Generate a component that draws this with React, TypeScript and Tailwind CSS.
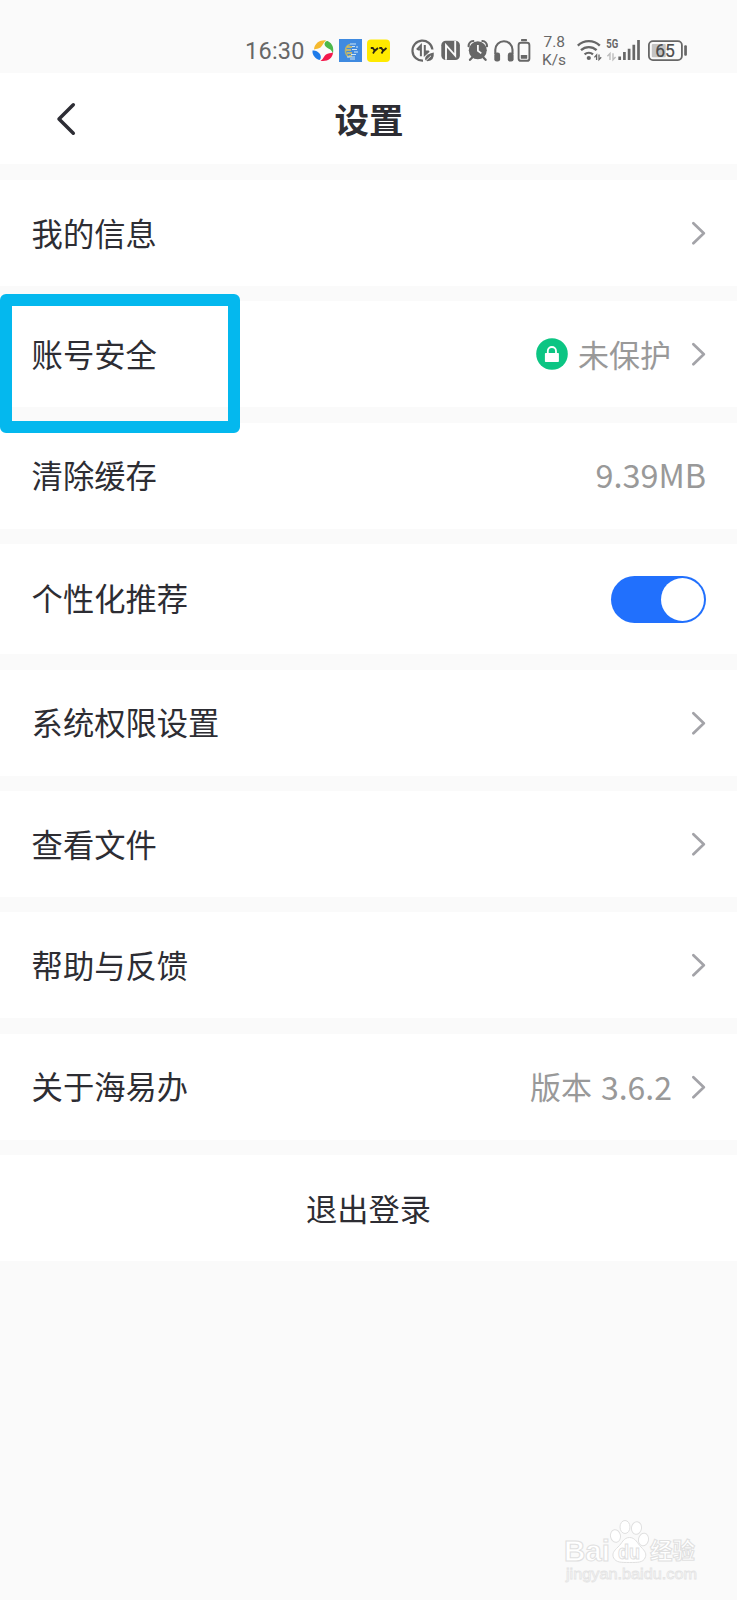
import type { ReactNode } from "react";

const INK = "#676767";
const CJK = "font-['Noto_Sans_CJK_SC',sans-serif]";

function Glyph({ x, w, children, className = "" }: { x: number; w: number; children: ReactNode; className?: string }) {
  return (
    <svg width={w} height={36} viewBox={`${x} 32 ${w} 36`} className={`shrink-0 ${className}`} fill="none">
      {children}
    </svg>
  );
}

function StatusBar() {
  return (
    <div className="flex h-[73px] items-start bg-[#fafafa] pt-[32px] pl-[244px]">
      <Glyph x={244} w={66}>
        <text x="245" y="58.6" fontFamily="Roboto, sans-serif" fontSize="23.5" textLength="59.5" fill={INK}>16:30</text>
      </Glyph>
      <Glyph x={310} w={26}>
        <path d="M314 49.5C314.5 43 320 39.8 326 40.3C323 43 323 45.5 320.5 47.5C318.5 49 316.5 48.5 314 49.5Z" fill="#f5b92e" />
        <path d="M324.5 43.8C325.5 40.8 327 40.8 328 41.3C332.5 43.5 334 48 333 53.5C331.5 49.5 330 49.5 327.5 48C325.5 46.8 324.5 45.5 324.5 43.8Z" fill="#4cb84a" />
        <path d="M333 52.5C332.5 58.5 327.5 61.8 320.5 60.8C324 58.5 323.5 56.5 326 54.5C328 53 330.5 53.5 333 52.5Z" fill="#f3184c" />
        <path d="M312.5 50.5C315 50 317.5 51 319.5 53.5C321.5 56 321 59 319.5 60C315.5 59 312 55 312.5 50.5Z" fill="#1e7bea" />
      </Glyph>
      <Glyph x={336} w={29}>
        <rect x="339" y="39" width="23" height="23" fill="#3f8ae0" />
        <path d="M350 44.5 Q345.5 46 345.5 50.5 Q345.5 55 349 57" stroke="#b9b26a" strokeWidth="1.6" />
        <path d="M347 47h5M346 50h5M347 53h5M349 56h3" stroke="#e2c256" strokeWidth="1.3" />
        <path d="M350 44h6M352 46.5h3M356 47h2M352 49.5h5M354 52h4M351 54.5h5M347 57h8M350 59h5" stroke="#cfe6f4" strokeWidth="1" />
      </Glyph>
      <Glyph x={365} w={45}>
        <rect x="367" y="39.5" width="23" height="22.5" rx="4" fill="#ffea00" />
        <path d="M370.8 48h2l2 2.8l3.2-2.8M374.8 50.6l-1.8 2.8M379.3 48h2l2 2.8l3.2-2.8M383.3 50.6l-1.8 2.8" stroke="#2b2613" strokeWidth="1.8" />
      </Glyph>
      <Glyph x={410} w={28}>
        <path d="M432.4 49.5 A10 10 0 1 0 423 60.6" stroke={INK} strokeWidth="2.2" />
        <path d="M420.9 56.3V45.5L416.8 49.6M420.9 49.5h-3M424.8 45v9.8L429 51M425 51.5h3.5" stroke={INK} strokeWidth="2" />
        <path d="M433.8 52.5 Q434.5 61 427.5 61.2 Q424 61 425.5 57 Q427.5 53.8 433.8 52.5Z" fill={INK} />
        <path d="M424.5 62 L431 55.8" stroke="#fafafa" strokeWidth="0.9" />
      </Glyph>
      <Glyph x={438} w={26}>
        <rect x="441.3" y="40.8" width="18.6" height="19.2" rx="4.5" fill={INK} />
        <path d="M446 59.8V45.2L455.2 55.6V41" stroke="#fafafa" strokeWidth="1.9" />
      </Glyph>
      <Glyph x={464} w={27}>
        <circle cx="477.8" cy="50.3" r="9" fill={INK} />
        <path d="M468.6 46.2 A5 5 0 0 1 473.3 41M482.4 41 A5 5 0 0 1 487 46.2" stroke={INK} strokeWidth="2.2" strokeLinecap="round" />
        <path d="M472.2 57.5l-2.2 2.3M483.4 57.5l2.2 2.3" stroke={INK} strokeWidth="2.3" strokeLinecap="round" />
        <path d="M477.9 45v5.8l3.4 2.6" stroke="#fafafa" strokeWidth="1.8" />
      </Glyph>
      <Glyph x={491} w={25}>
        <path d="M495.3 54V49.8a8.6 8.6 0 0 1 17.2 0V54" stroke={INK} strokeWidth="2.1" />
        <rect x="494.3" y="52.6" width="5.8" height="9" rx="2.4" fill={INK} />
        <rect x="507.8" y="52.6" width="5.8" height="9" rx="2.4" fill={INK} />
      </Glyph>
      <Glyph x={516} w={20}>
        <rect x="518.6" y="42.8" width="10.8" height="18" rx="2.4" stroke={INK} strokeWidth="1.9" />
        <rect x="521" y="39" width="6" height="2.2" rx="0.8" fill={INK} />
        <rect x="520.8" y="55" width="6.4" height="3.8" rx="0.6" fill={INK} />
      </Glyph>
      <Glyph x={536} w={38}>
        <text x="543.5" y="47.3" fontFamily="Roboto, sans-serif" fontSize="15.5" textLength="21.5" fill={INK}>7.8</text>
        <text x="542" y="65" fontFamily="Roboto, sans-serif" fontSize="15.5" textLength="24" fill={INK}>K/s</text>
      </Glyph>
      <Glyph x={574} w={30}>
        <path d="M577.8 45.6a16 16 0 0 1 22 0M581 50.2a11.5 11.5 0 0 1 15.6 0M584.6 54.4a6.5 6.5 0 0 1 8.4 0" stroke={INK} strokeWidth="2.3" />
        <circle cx="588.8" cy="58" r="2.1" fill={INK} />
        <path d="M596.6 60v-5l-2.2 2.4M599 54.6v5l2.2-2.4" stroke={INK} strokeWidth="1.3" />
      </Glyph>
      <Glyph x={604} w={40}>
        <text x="606.3" y="48" fontFamily="Roboto, sans-serif" fontWeight="700" fontSize="12" textLength="12" lengthAdjust="spacingAndGlyphs" fill={INK}>5G</text>
        <path d="M610 60v-6.5l-2.6 2.8M613 53.2v6.5l2.6-2.8" stroke="#bdbdbd" strokeWidth="1.4" />
        <path d="M619.7 60v-3.5M624.4 60v-8M629.1 60v-11.2M633.8 60v-15.2M638.5 60V40" stroke={INK} strokeWidth="2.7" />
      </Glyph>
      <Glyph x={644} w={46}>
        <rect x="648.9" y="41.1" width="33" height="19" rx="4" stroke={INK} strokeWidth="1.8" />
        <rect x="651.8" y="44" width="14" height="13.2" rx="1" fill="#c4c4c4" />
        <rect x="684.2" y="45.2" width="2.7" height="10.6" rx="1" fill={INK} />
        <text x="655.3" y="56.9" fontFamily="Roboto, sans-serif" fontSize="17.5" textLength="19.5" fill="#4c4c4c" stroke="#4c4c4c" strokeWidth="0.2">65</text>
      </Glyph>
    </div>
  );
}

function Chevron() {
  return (
    <svg width="14" height="26" viewBox="0 0 14 26" fill="none" className="ml-[20px] shrink-0">
      <path d="M1.4 3.2 L11.8 13.2 L1.4 23.2" stroke="#a3a3a8" strokeWidth="2.7" strokeLinecap="round" strokeLinejoin="round" />
    </svg>
  );
}

function LockBadge() {
  return (
    <svg width="32" height="32" viewBox="0 0 32 32" fill="none" className="mr-[10px]">
      <circle cx="16" cy="16" r="15.8" fill="#0cc583" />
      <path d="M11.8 16v-2.9a4.1 4.1 0 0 1 8.2 0V16" stroke="#fff" strokeWidth="1.8" />
      <rect x="8.9" y="15" width="14" height="9" rx="0.8" fill="#fff" />
    </svg>
  );
}

function Toggle() {
  return (
    <div className="flex h-[47px] w-[95px] items-center justify-end rounded-full bg-[#2170fd] pr-[2px]">
      <div className="size-[43px] rounded-full bg-white" />
    </div>
  );
}

function Row({ label, children, tall = false }: { label: string; children?: ReactNode; tall?: boolean }) {
  return (
    <div className={`flex shrink-0 items-center justify-between bg-white pr-[31px] pl-[31.6px] ${tall ? "h-[110px]" : "h-[106px]"}`}>
      <span className={`text-[31.3px] leading-[46px] whitespace-nowrap text-[#2d2d33] ${tall ? "pb-[3px]" : "pb-[0.8px]"}`}>{label}</span>
      <div className="flex items-center text-[31px] leading-[46px] text-[#999]">{children}</div>
    </div>
  );
}

function Watermark() {
  const outline = { fill: "#fff", stroke: "#e0e0e0", strokeWidth: 1 };
  return (
    <svg width="150" height="76" viewBox="555 1515 150 76" className="absolute right-[32px] bottom-[9px]">
      <text x="564" y="1561" fontFamily="Liberation Sans, sans-serif" fontWeight="700" fontSize="29" textLength="46" lengthAdjust="spacingAndGlyphs" {...outline}>Bai</text>
      <g {...outline}>
        <ellipse cx="615.5" cy="1536" rx="5" ry="6.3" transform="rotate(-12 615.5 1536)" />
        <ellipse cx="625" cy="1527" rx="5" ry="6.5" />
        <ellipse cx="636.5" cy="1528" rx="5" ry="6.3" transform="rotate(8 636.5 1528)" />
        <ellipse cx="643.5" cy="1539.5" rx="5" ry="6.3" transform="rotate(12 643.5 1539.5)" />
        <path d="M629.5 1537.5c6 0 8 6 11.5 9.5c4 4 6 7 4 11c-2 4.5-7 4.5-15.5 4.500s-13.5 0-15.8-4.5c-2-4 0-7 4.3-11c4-3.5 5.5-9.5 11.5-9.5z" />
      </g>
      <text x="618" y="1559" fontFamily="Liberation Sans, sans-serif" fontWeight="700" fontSize="20" textLength="22" lengthAdjust="spacingAndGlyphs" {...outline}>du</text>
      <text x="650" y="1559" fontFamily="Noto Sans CJK SC, sans-serif" fontWeight="700" fontSize="22.5" textLength="45" {...outline}>经验</text>
      <text x="566" y="1579" fontFamily="Liberation Sans, sans-serif" fontSize="15" textLength="131" lengthAdjust="spacingAndGlyphs" fill="#fff" stroke="#e4e4e4" strokeWidth="0.8">jingyan.baidu.com</text>
    </svg>
  );
}

export default function App() {
  return (
    <div className={`relative h-[1600px] w-[737px] overflow-hidden bg-[#fafafa] ${CJK}`}>
      <StatusBar />
      <header className="grid h-[91px] grid-cols-[1fr_auto_1fr] items-center bg-white">
        <svg width="20" height="34" viewBox="0 0 20 34" fill="none" className="ml-[56px]">
          <path d="M17.3 2.8 L3 17 L17.3 31.2" stroke="#2d2d35" strokeWidth="3.5" strokeLinecap="round" strokeLinejoin="round" />
        </svg>
        <h1 className="pb-[2px] pl-px text-[34.5px] leading-[50px] font-bold text-[#2d2d33]">设置</h1>
      </header>
      <main className="mt-[16px] flex flex-col gap-[15.4px]">
        <Row label="我的信息"><Chevron /></Row>
        <div className="relative">
          <Row label="账号安全">
            <LockBadge />
            <span className="pr-px">未保护</span>
            <Chevron />
          </Row>
          <div className="absolute top-[-7px] left-0 h-[139px] w-[240px] rounded-[6px] border-[12px] border-[#04b8ee]" />
        </div>
        <Row label="清除缓存"><span className="pb-[3px] text-[32.4px]">9.39MB</span></Row>
        <Row label="个性化推荐" tall><Toggle /></Row>
        <Row label="系统权限设置"><Chevron /></Row>
        <Row label="查看文件"><Chevron /></Row>
        <Row label="帮助与反馈"><Chevron /></Row>
        <Row label="关于海易办">
          <span className="pb-[1.6px]">版本</span>
          <span className="pb-[2px] pl-[9px] text-[32px]">3.6.2</span>
          <Chevron />
        </Row>
        <button className="flex h-[106px] shrink-0 items-center justify-center bg-white pb-[0.4px] text-[31.2px] leading-[46px] text-[#2d2d33]">退出登录</button>
      </main>
      <Watermark />
    </div>
  );
}
